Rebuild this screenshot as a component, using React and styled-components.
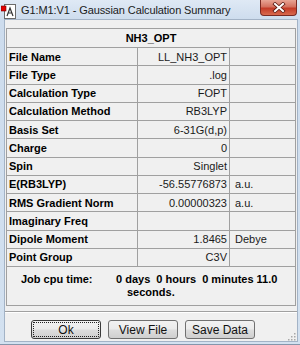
import React from "react";
import styled, { createGlobalStyle } from "styled-components";

const GlobalStyle = createGlobalStyle`
  html, body {
    margin: 0;
    padding: 0;
    background: #d6e3f1;
  }
  body {
    font-family: "Liberation Sans", Arial, sans-serif;
  }
`;

const Window = styled.div`
  width: 300px;
  height: 345px;
  box-sizing: border-box;
  display: flex;
  flex-direction: column;
  overflow: hidden;
  background: linear-gradient(#dfe9f5, #cddced 20px, #d3e1f0);
  border-bottom: 1px solid #8596ab;
`;

const TitleBar = styled.div`
  height: 20px;
  flex-shrink: 0;
  display: flex;
  align-items: center;
`;

const AppIcon = styled.svg`
  width: 16px;
  height: 16px;
  margin: 1px 4px 0 1px;
  flex-shrink: 0;
`;

const Title = styled.span`
  font-size: 11px;
  letter-spacing: -0.1px;
  color: #1b1b1b;
  white-space: nowrap;
`;

const CloseButton = styled.div`
  margin-left: auto;
  margin-right: 3px;
  align-self: flex-start;
  width: 37px;
  height: 16px;
  box-sizing: border-box;
  border: 1px solid #7a2a22;
  border-top: none;
  border-radius: 0 0 4px 4px;
  background: linear-gradient(#e8a595, #d4715f 45%, #c43b27 55%, #d86a4e);
  display: flex;
  align-items: center;
  justify-content: center;
`;

const Client = styled.div`
  flex: 1;
  margin: 0 3px 3px 5px;
  padding: 8px 1px 0 1px;
  background: #f0f0f0;
  box-shadow: 0 0 0 1px #a3b3c6;
  display: flex;
  flex-direction: column;
`;

const Panel = styled.div`
  border: 1px solid #a0a0a0;
`;

const Header = styled.div`
  height: 19px;
  box-sizing: border-box;
  border-bottom: 1px solid #a0a0a0;
  display: flex;
  align-items: center;
  justify-content: center;
  font-size: 11px;
  font-weight: bold;
  color: #000;
`;

const Row = styled.div`
  display: grid;
  grid-template-columns: 131px 92px 1fr;
  height: 18.25px;
  box-sizing: border-box;
  border-bottom: 1px solid #a0a0a0;
  font-size: 11px;
`;

const Cell = styled.div`
  display: flex;
  align-items: center;
  box-sizing: border-box;
  white-space: nowrap;
  overflow: hidden;
`;

const LabelCell = styled(Cell)`
  padding-left: 2px;
  border-right: 1px solid #a0a0a0;
  font-weight: bold;
  color: #000;
`;

const ValueCell = styled(Cell)`
  justify-content: flex-end;
  padding-right: 2px;
  border-right: 1px solid #a0a0a0;
  color: #1a1a1a;
`;

const UnitCell = styled(Cell)`
  padding-left: 5px;
  color: #1a1a1a;
`;

const JobTime = styled.div`
  height: 38px;
  display: flex;
  align-items: center;
  padding-left: 14px;
  font-size: 11px;
  font-weight: bold;
  line-height: 13px;
  color: #000;
`;

const JobLabel = styled.div`
  width: 95px;
  align-self: flex-start;
  margin-top: 6px;
`;

const JobValue = styled.div`
  display: flex;
  flex-direction: column;
  white-space: pre;
`;

const JobLine = styled.span`
  padding-left: ${({ indent }) => indent || 0}px;
`;

const Separator = styled.div`
  margin: 5px -1px 0;
  height: 1px;
  background: #a0a0a0;
  border-bottom: 1px solid #ffffff;
`;

const ButtonBar = styled.div`
  display: flex;
  gap: 7px;
  margin-top: 7px;
  padding-left: 25px;
`;

const Button = styled.button`
  position: relative;
  width: 70px;
  height: 19px;
  padding: 0;
  box-sizing: border-box;
  border: 1px solid ${({ primary }) => (primary ? "#3a3a3a" : "#707070")};
  border-radius: 3px;
  background: linear-gradient(#f2f2f2, #ebebeb 48%, #dddddd 52%, #cfcfcf);
  font-family: "Liberation Sans", Arial, sans-serif;
  font-size: 12px;
  color: #111;
  outline: ${({ primary }) => (primary ? "1px dotted #222" : "none")};
  outline-offset: -3px;
`;

const Grip = styled.svg`
  margin-left: auto;
  align-self: flex-end;
  width: 9px;
  height: 9px;
  margin-bottom: -2px;
`;

const rows = [
  ["File Name", "LL_NH3_OPT", ""],
  ["File Type", ".log", ""],
  ["Calculation Type", "FOPT", ""],
  ["Calculation Method", "RB3LYP", ""],
  ["Basis Set", "6-31G(d,p)", ""],
  ["Charge", "0", ""],
  ["Spin", "Singlet", ""],
  ["E(RB3LYP)", "-56.55776873", "a.u."],
  ["RMS Gradient Norm", "0.00000323", "a.u."],
  ["Imaginary Freq", "", ""],
  ["Dipole Moment", "1.8465", "Debye"],
  ["Point Group", "C3V", ""],
];

const App = () => (
  <>
    <GlobalStyle />
    <Window>
      <TitleBar>
        <AppIcon viewBox="0 0 16 16">
          <rect x="3.5" y="1.5" width="11" height="14" fill="#fff" stroke="#6b6b6b" />
          <path d="M6 13 L9 5 L12 13 M7.2 10 H10.8" fill="none" stroke="#333" strokeWidth="1.2" />
          <rect x="0" y="3" width="5" height="5" fill="#e00000" stroke="#700" strokeWidth="0.6" />
        </AppIcon>
        <Title>G1:M1:V1 - Gaussian Calculation Summary</Title>
        <CloseButton>
          <svg width="14" height="11" viewBox="0 0 14 11">
            <path d="M3 2 L11 9 M11 2 L3 9" stroke="#5a1a12" strokeWidth="3.6" strokeLinecap="square" />
            <path d="M3 2 L11 9 M11 2 L3 9" stroke="#ffffff" strokeWidth="2" strokeLinecap="square" />
          </svg>
        </CloseButton>
      </TitleBar>
      <Client>
        <Panel>
          <Header>NH3_OPT</Header>
          {rows.map(([label, value, unit]) => (
            <Row key={label}>
              <LabelCell>{label}</LabelCell>
              <ValueCell>{value}</ValueCell>
              <UnitCell>{unit}</UnitCell>
            </Row>
          ))}
          <JobTime>
            <JobLabel>Job cpu time:</JobLabel>
            <JobValue>
              <JobLine>0 days  0 hours  0 minutes 11.0</JobLine>
              <JobLine indent={11}>seconds.</JobLine>
            </JobValue>
          </JobTime>
        </Panel>
        <Separator />
        <ButtonBar>
          <Button primary>Ok</Button>
          <Button>View File</Button>
          <Button>Save Data</Button>
          <Grip viewBox="0 0 9 9">
            {[
              [7, 1],
              [7, 4],
              [4, 4],
              [7, 7],
              [4, 7],
              [1, 7],
            ].map(([x, y]) => (
              <rect key={`${x}-${y}`} x={x} y={y} width="1.5" height="1.5" fill="#a8a8a8" />
            ))}
          </Grip>
        </ButtonBar>
      </Client>
    </Window>
  </>
);

export default App;
